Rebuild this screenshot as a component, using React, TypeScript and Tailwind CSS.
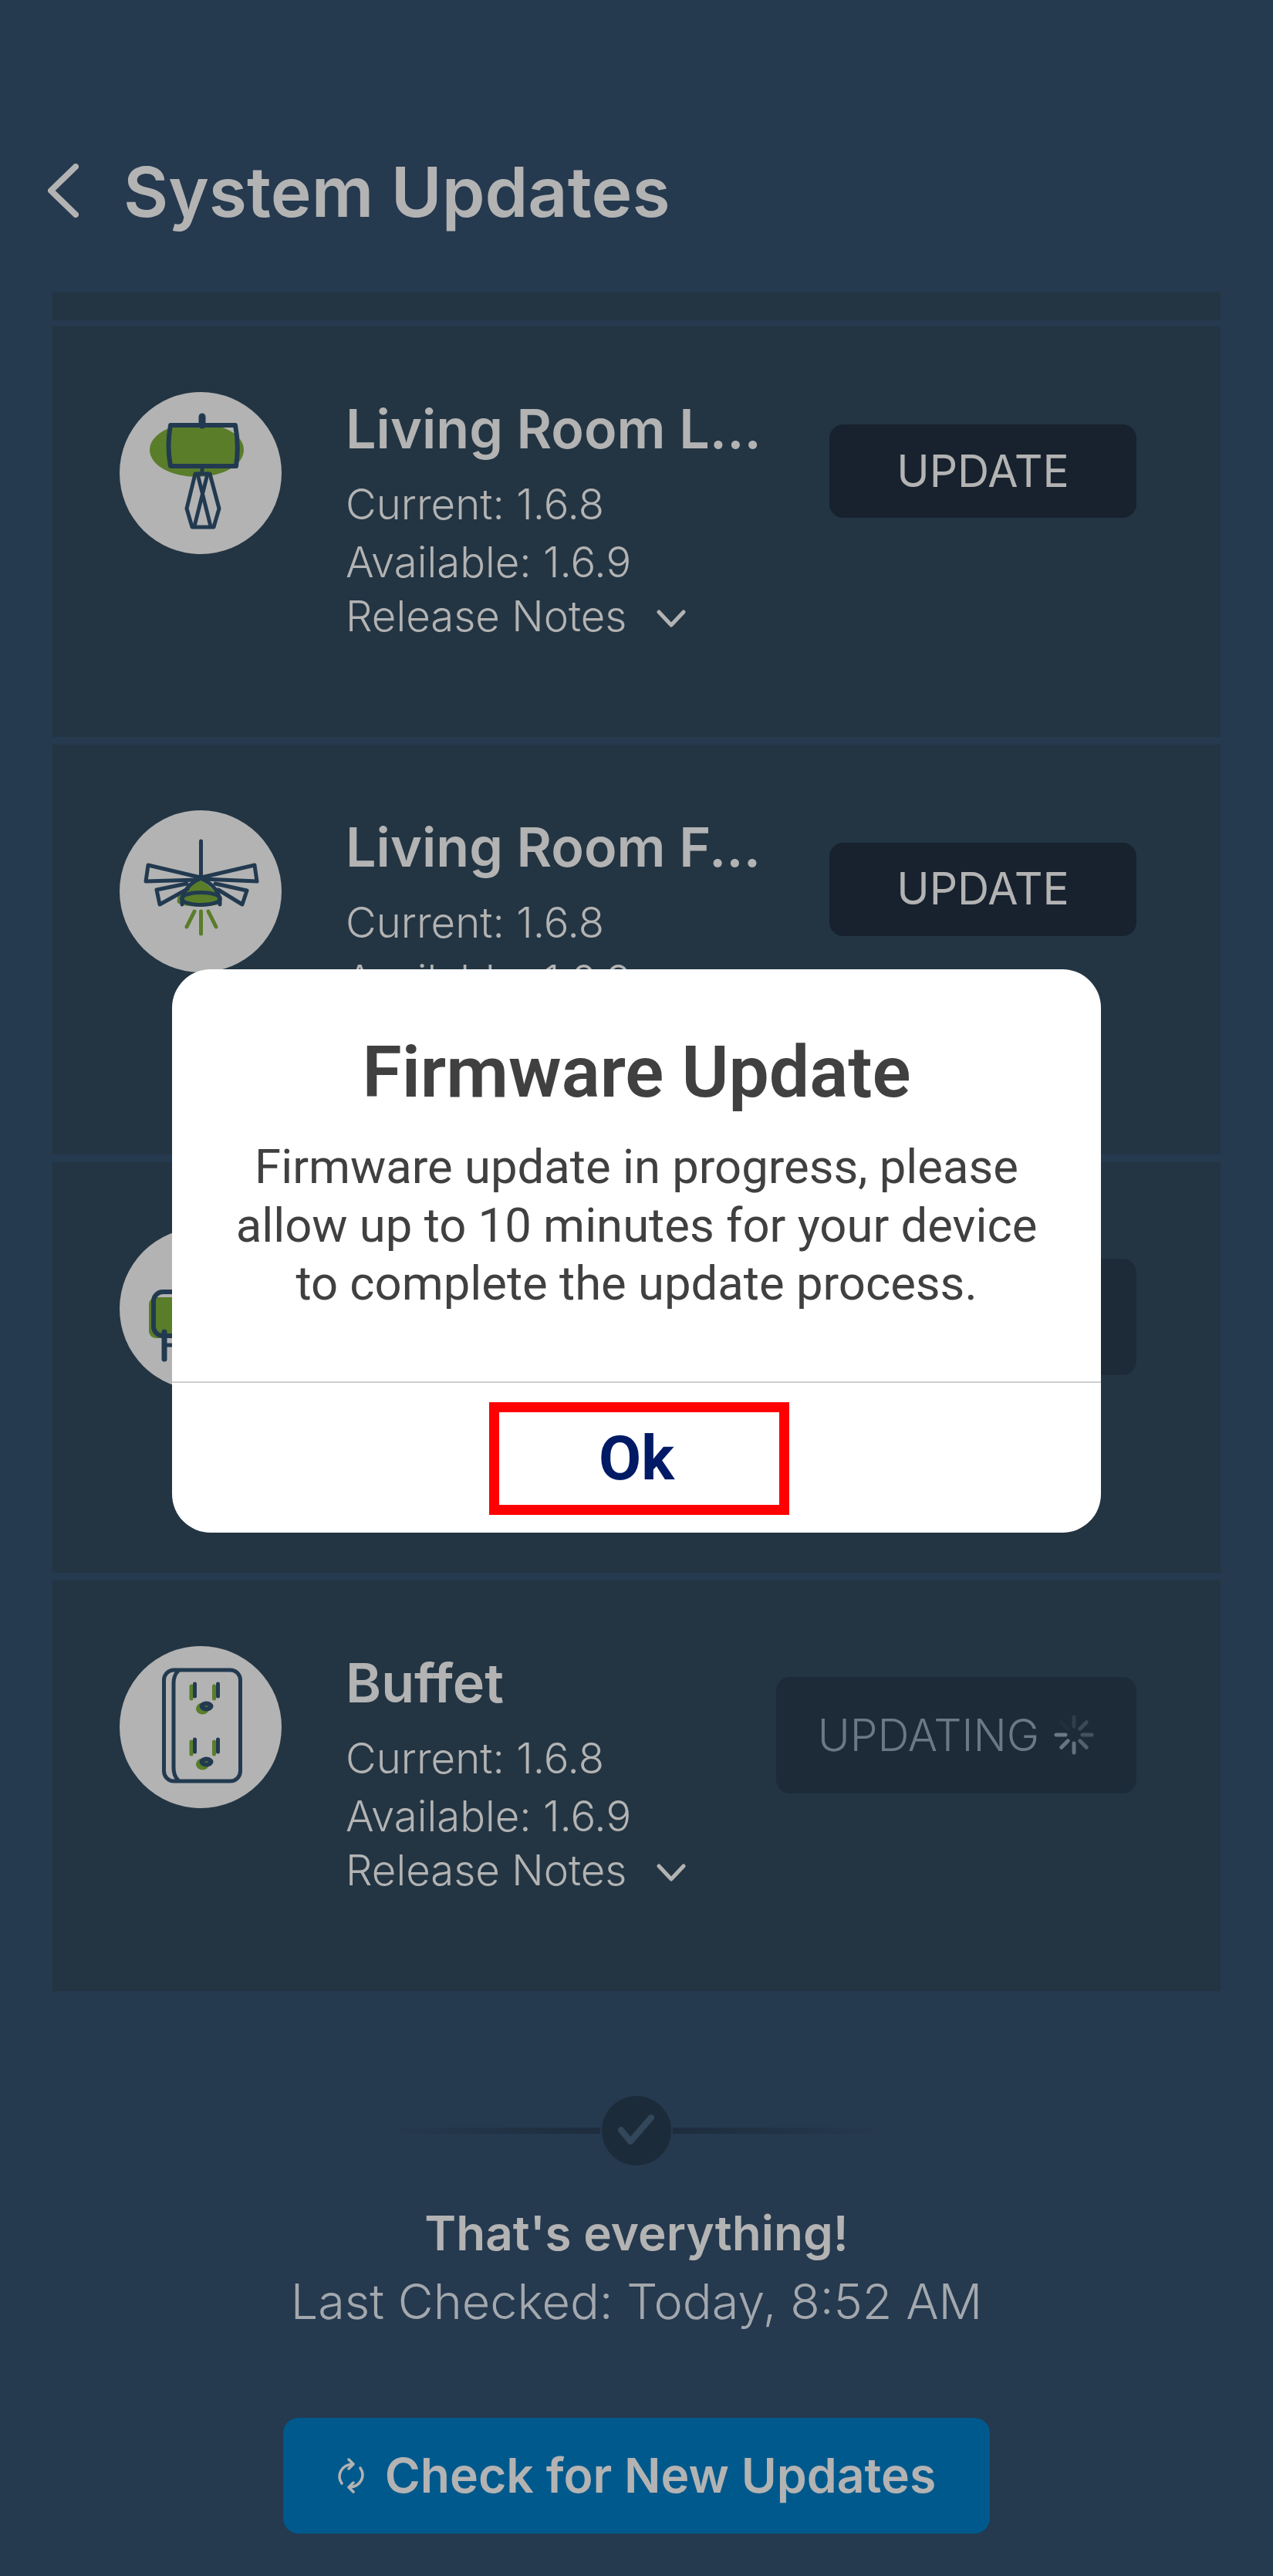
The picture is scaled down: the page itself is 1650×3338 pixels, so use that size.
import type { ReactNode } from 'react'

const DARK = '#223a50'
const GREEN = '#5a7d2a'

function LampIcon() {
  return (
    <svg width="210" height="210" viewBox="0 0 210 210" fill="none" stroke={DARK} strokeLinejoin="round" strokeLinecap="round">
      <ellipse cx="100" cy="75" rx="61" ry="35" fill={GREEN} stroke="none" />
      <path d="M66 43H150Q155 69 151 96H66Q61 69 66 43Z" strokeWidth="6" />
      <path d="M107 32V43" strokeWidth="9" />
      <path d="M107 96V106" strokeWidth="5" />
      <path d="M98 106H117L129 151L122 175H94L87 151Z" strokeWidth="5" />
      <path d="M101 106L118 174M114 106L97 174" strokeWidth="5" />
    </svg>
  )
}

function FanIcon() {
  return (
    <svg width="210" height="210" viewBox="0 0 210 210" fill="none" stroke={DARK} strokeLinejoin="round" strokeLinecap="round">
      <path d="M105 90C88 98 72 108 75 120Q90 128 130 122C132 112 120 100 105 90Z" fill={GREEN} stroke="none" />
      <path d="M105.5 40V86" strokeWidth="5" />
      <path d="M105 87L37 71L34 92L102 90" strokeWidth="5" />
      <path d="M106 87L175 71L178 92L108 89" strokeWidth="5" />
      <path d="M87 95L48 103L52 122L88 102" strokeWidth="5" />
      <path d="M124 95L165 104L159 122L128 103" strokeWidth="5" />
      <path d="M105 88C90 95 80 105 81 122M105 88C120 95 131 105 130 122" strokeWidth="5" />
      <ellipse cx="105.5" cy="114.5" rx="25" ry="8" strokeWidth="5" />
      <path d="M97 131L87 151M105.5 131V160M115 131L125 151" stroke={GREEN} strokeWidth="5" />
    </svg>
  )
}

function PlugIcon() {
  return (
    <svg width="210" height="210" viewBox="0 0 210 210" fill="none" stroke={DARK} strokeLinejoin="round" strokeLinecap="round">
      <rect x="38" y="90" width="60" height="53" rx="9" fill={GREEN} stroke="none" />
      <rect x="44" y="83" width="60" height="57" rx="12" strokeWidth="6" />
      <path d="M58 135V170" strokeWidth="7" />
      <path d="M58 152H90" strokeWidth="5" />
    </svg>
  )
}

function OutletIcon() {
  const socket = (y: number) => (
    <g key={y}>
      <path d={`M93 ${y + 52}V${y + 68}M122.5 ${y + 52}V${y + 68}`} stroke={GREEN} strokeWidth="5" />
      <ellipse cx="107.5" cy={y + 81} rx="8.5" ry="7.5" fill={GREEN} stroke="none" />
      <path d={`M97.5 ${y + 49}V${y + 65}M127.5 ${y + 49}V${y + 65}`} strokeWidth="5" />
      <ellipse cx="112.5" cy={y + 78} rx="9" ry="6.5" fill={DARK} stroke="none" />
      <path d={`M111 ${y + 78}H114`} stroke={GREEN} strokeWidth="1.5" />
    </g>
  )
  return (
    <svg width="210" height="210" viewBox="0 0 210 210" fill="none" stroke={DARK} strokeLinejoin="round" strokeLinecap="round">
      <rect x="57.5" y="31" width="99" height="144" rx="13" strokeWidth="5" />
      <path d="M76 32Q70 38 70 48V158Q70 168 76 174" strokeWidth="5" />
      {socket(0)}
      {socket(72)}
    </svg>
  )
}

function Spinner() {
  const bars = [0, 45, 90, 135, 180, 225, 270, 315]
  return (
    <svg width="54" height="54" viewBox="0 0 54 54" fill="none" className="ml-[18px]">
      {bars.map((deg, i) => (
        <line
          key={deg}
          x1="27"
          y1="4"
          x2="27"
          y2="16"
          stroke="#6b7985"
          strokeWidth="5"
          strokeLinecap="round"
          opacity={[0.25, 0.4, 0.5, 0.7, 0.9, 0.95, 1, 0.08][i]}
          transform={`rotate(${deg} 27 27)`}
        />
      ))}
    </svg>
  )
}

type CardProps = {
  icon: ReactNode
  name?: string
  updating?: boolean
  details?: boolean
}

function DeviceCard({ icon, name, updating, details = true }: CardProps) {
  return (
    <div className="h-[531.67px] bg-[#233543] pl-[87px] pr-[109px] pt-[85px] flex">
      <div className="w-[210px] h-[210px] rounded-full bg-[#b3b3b3] shrink-0">{icon}</div>
      <div className="ml-[83px] flex-1 text-[#b3b3b3]">
        {details && (
          <>
            <div className="mt-[8px] h-[80px] text-[70px] leading-[80px] font-semibold whitespace-nowrap">{name}</div>
            <div className="mt-[19px] text-[54.5px] leading-[76px] font-light whitespace-nowrap">Current: 1.6.8</div>
            <div className="text-[54.5px] leading-[75px] font-light whitespace-nowrap">Available: 1.6.9</div>
            <div className="flex items-center text-[54.5px] leading-[64px] font-light whitespace-nowrap">
              Release Notes
              <svg width="38" height="30" viewBox="0 0 38 30" fill="none" className="ml-[39px] mt-[6px]">
                <path d="M3 7L19 24L35 7" stroke="#b3b3b3" strokeWidth="5" strokeLinecap="round" strokeLinejoin="round" />
              </svg>
            </div>
          </>
        )}
      </div>
      {updating ? (
        <div className="w-[467px] h-[151px] mt-[40px] rounded-[18px] bg-[#1d2b39] flex items-center justify-center text-[57px] font-light text-[#6b7985] shrink-0">
          {details && 'UPDATING'}
          {details && <Spinner />}
        </div>
      ) : (
        <div className="w-[398px] h-[121px] mt-[42px] rounded-[18px] bg-[#17222e] flex items-center justify-center text-[57px] font-normal text-[#b3b3b3] shrink-0">
          UPDATE
        </div>
      )}
    </div>
  )
}

export default function App() {
  return (
    <div className="relative w-[1650px] h-[3338px] overflow-hidden bg-[#25394f] font-['Inter',sans-serif]">
      <div className="h-[379px] pt-[194px] pl-[62px] flex items-start">
        <svg width="40" height="70" viewBox="0 0 40 70" fill="none" className="mt-[18px]">
          <path d="M36 4L4 35L36 66" stroke="#b3b3b3" strokeWidth="8" strokeLinecap="round" strokeLinejoin="round" />
        </svg>
        <h1 className="ml-[58px] text-[89.5px] leading-[110px] font-semibold text-[#b3b3b3] whitespace-nowrap">System Updates</h1>
      </div>

      <div className="mx-[68px] flex flex-col gap-[10px]">
        <div className="-mb-[2px] h-[36px] bg-[#233543]" />
        <DeviceCard icon={<LampIcon />} name="Living Room L..." />
        <DeviceCard icon={<FanIcon />} name="Living Room F..." />
        <DeviceCard icon={<PlugIcon />} updating details={false} />
        <DeviceCard icon={<OutletIcon />} name="Buffet" updating />
      </div>

      <div className="mt-[136px] flex flex-col items-center">
        <div className="relative w-[640px] h-[90px] flex items-center justify-center">
          <div className="absolute left-0 right-0 top-[41px] h-[8px] bg-gradient-to-r from-transparent via-[#1c2b3a] to-transparent" />
          <div className="relative w-[90px] h-[90px] rounded-full bg-[#1c2b3a] ring-2 ring-[#25394f] flex items-center justify-center">
            <svg width="50" height="50" viewBox="0 0 50 50" fill="none">
              <path d="M5 24L17 39L44 8" stroke="#33475a" strokeWidth="8" strokeLinecap="round" strokeLinejoin="round" />
            </svg>
          </div>
        </div>
        <div className="mt-[44px] text-[62px] leading-[88px] font-semibold text-[#b3b3b3]">That&apos;s everything!</div>
        <div className="mt-[1px] text-[63px] leading-[86px] font-light text-[#a3a8ad] whitespace-nowrap">Last Checked: Today, 8:52 AM</div>
        <div className="mt-[108px] w-[916px] h-[150px] rounded-[20px] bg-[#00598c] flex items-center justify-center text-[62.5px] font-semibold text-[#b3b3b3]">
          <svg width="36" height="46" viewBox="0 0 36 46" fill="none" className="mr-[26px]">
            <path d="M6 33C-1 23 5 9 20 8M15 2L21 8L15 14M30 13C37 23 31 37 16 38M21 44L15 38L21 32" stroke="#b3b3b3" strokeWidth="3.5" strokeLinecap="round" strokeLinejoin="round" />
          </svg>
          Check for New Updates
        </div>
      </div>

      {/* Dialog */}
      <div className="absolute left-[223px] top-[1256px] w-[1204px] h-[730px] rounded-[50px] bg-white font-['Roboto',sans-serif] flex flex-col">
        <div className="h-[536px] border-b-2 border-[#cfcfcf] flex flex-col items-center">
          <div className="mt-[82px] text-[93px] leading-[104px] font-semibold text-[#404040] whitespace-nowrap">Firmware Update</div>
          <div className="mt-[33px] text-[61.6px] leading-[75.5px] text-[#404040] text-center whitespace-nowrap">
            <div>Firmware update in progress, please</div>
            <div>allow up to 10 minutes for your device</div>
            <div>to complete the update process.</div>
          </div>
        </div>
        <div className="flex-1 flex justify-center pt-[25px] pl-[7px]">
          <div className="w-[389px] h-[146px] border-[13px] border-[#ff0000] flex items-center justify-center pr-[7px] text-[80px] font-bold text-[#001a66]">
            Ok
          </div>
        </div>
      </div>
    </div>
  )
}
